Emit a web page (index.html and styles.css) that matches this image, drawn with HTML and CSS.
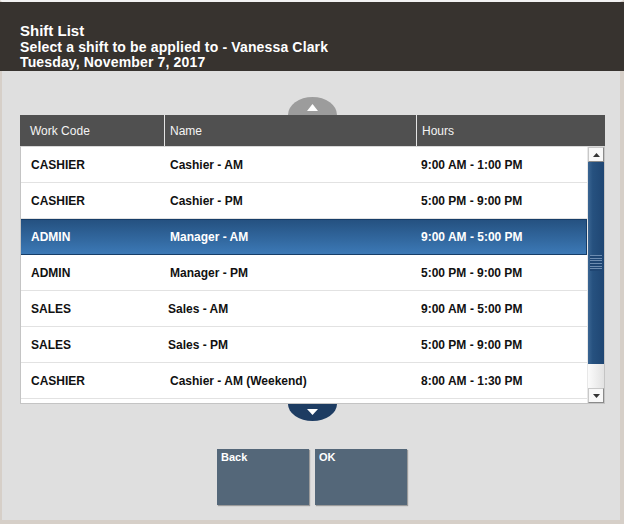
FILE: index.html
```html
<!DOCTYPE html>
<html lang="en">

<head>
    <meta charset="UTF-8">
    <meta name="viewport" content="width=device-width, initial-scale=1.0">
    <title>Shift List</title>
    <link rel="stylesheet" href="styles.css">
</head>

<body>
    <div class="screen">
        <div class="header">
            <div class="title">Shift List</div>
            <div class="subtitle">Select a shift to be applied to - Vanessa Clark</div>
            <div class="subtitle">Tuesday, November 7, 2017</div>
        </div>

        <div class="content">
            <div class="arrow arrow-up">
                <svg width="11" height="7" viewBox="0 0 11 7"><polygon points="5.5,0 11,7 0,7" fill="#fff" /></svg>
            </div>

            <div class="grid">
                <div class="grid-head">
                    <div class="hcell">Work Code</div>
                    <div class="hcell">Name</div>
                    <div class="hcell last">Hours</div>
                </div>

                <div class="grid-body">
                    <div class="rows">
                        <div class="row">
                            <div class="c1">CASHIER</div>
                            <div class="c2">Cashier - AM</div>
                            <div class="c3">9:00 AM - 1:00 PM</div>
                        </div>
                        <div class="row">
                            <div class="c1">CASHIER</div>
                            <div class="c2">Cashier - PM</div>
                            <div class="c3">5:00 PM - 9:00 PM</div>
                        </div>
                        <div class="row selected">
                            <div class="c1">ADMIN</div>
                            <div class="c2">Manager - AM</div>
                            <div class="c3">9:00 AM - 5:00 PM</div>
                        </div>
                        <div class="row">
                            <div class="c1">ADMIN</div>
                            <div class="c2">Manager - PM</div>
                            <div class="c3">5:00 PM - 9:00 PM</div>
                        </div>
                        <div class="row">
                            <div class="c1">SALES</div>
                            <div class="c2 tight">Sales - AM</div>
                            <div class="c3">9:00 AM - 5:00 PM</div>
                        </div>
                        <div class="row">
                            <div class="c1">SALES</div>
                            <div class="c2 tight">Sales - PM</div>
                            <div class="c3">5:00 PM - 9:00 PM</div>
                        </div>
                        <div class="row">
                            <div class="c1">CASHIER</div>
                            <div class="c2">Cashier - AM (Weekend)</div>
                            <div class="c3">8:00 AM - 1:30 PM</div>
                        </div>
                        <!-- next row, scrolled out of view -->
                        <div class="row"></div>
                    </div>

                    <!-- scrollbar -->
                    <div class="scrollbar">
                        <div class="sb-btn">
                            <svg width="7" height="4" viewBox="0 0 7 4"><polygon points="3.5,0 7,4 0,4" fill="#333" /></svg>
                        </div>
                        <div class="sb-thumb">
                            <div class="grip"></div>
                        </div>
                        <div class="sb-track"></div>
                        <div class="sb-btn">
                            <svg width="7" height="4" viewBox="0 0 7 4"><polygon points="0,0 7,0 3.5,4" fill="#333" /></svg>
                        </div>
                    </div>
                </div>
            </div>

            <div class="arrow arrow-down">
                <svg width="11" height="6" viewBox="0 0 11 6"><polygon points="0,0 11,0 5.5,6" fill="#fff" /></svg>
            </div>

            <div class="buttons">
                <div class="btn">Back</div>
                <div class="btn">OK</div>
            </div>
        </div>
    </div>
</body>

</html>
```

FILE: styles.css
```css
* {
    padding: 0;
    margin: 0;
    box-sizing: border-box;
}

body {
    font-family: "Liberation Sans", Arial, sans-serif;
    background-color: #dfdfdf;
}

.screen {
    display: flex;
    flex-direction: column;
    width: 624px;
    height: 524px;
    border-top: 2px solid #f2f2f2;
    border-left: 2px solid #d6cfc8;
    border-right: 4px solid #d6cfc8;
    border-bottom: 4px solid #d6cfc8;
    background-color: #dfdfdf;
}

.header {
    height: 69px;
    margin-left: -2px;
    margin-right: -4px;
    padding: 20px 0 0 20px;
    background-color: #37332f;
    color: #fff;
    font-weight: bold;
}

.title {
    font-size: 15px;
    line-height: 18px;
}

.subtitle {
    font-size: 14px;
    line-height: 15px;
    letter-spacing: 0.15px;
}

.content {
    display: flex;
    flex-direction: column;
    flex: 1;
    padding: 26px 0 0 18px;
}

.arrow {
    display: flex;
    justify-content: center;
    width: 49px;
    margin-left: 268px;
}

.arrow-up {
    height: 18px;
    padding-top: 7px;
    background-color: #9c9c9c;
    border-radius: 50% 50% 0 0 / 100% 100% 0 0;
}

.arrow-down {
    height: 17px;
    padding-top: 5px;
    background-color: #1d3c62;
    border-radius: 0 0 50% 50% / 0 0 100% 100%;
}

.grid {
    width: 585px;
}

.grid-head {
    display: grid;
    grid-template-columns: 145px 252px 1fr;
    height: 31px;
    background-color: #505050;
    color: #f4f4f4;
    font-size: 12px;
}

.hcell {
    display: flex;
    align-items: center;
    padding-left: 5px;
    border-right: 1px solid #e4e4e4;
}

.hcell:first-child {
    padding-left: 10px;
}

.hcell.last {
    border-right: none;
}

.grid-body {
    display: flex;
    height: 258px;
    border: 1px solid #c4c4c4;
    border-top-color: #d8d8d8;
    background-color: #fff;
    overflow: hidden;
}

.rows {
    flex: 1;
    overflow: hidden;
}

.row {
    display: grid;
    grid-template-columns: 143px 252px 1fr;
    align-items: center;
    height: 36px;
    padding-top: 1px;
    border-bottom: 1px solid #e2e2e2;
    font-size: 12px;
    font-weight: bold;
    color: #111;
}

.row.selected {
    border-bottom-color: #163d68;
    box-shadow: inset 0 1px 0 #163d68, inset -1px 0 0 #163d68;
    background: linear-gradient(#24507f, #3c79b6);
    color: #fff;
}

.c1 {
    padding-left: 10px;
}

.c2 {
    padding-left: 6px;
}

.c2.tight {
    padding-left: 4px;
}

.c3 {
    padding-left: 5px;
}

.scrollbar {
    display: flex;
    flex-direction: column;
    width: 17px;
    border-left: 1px solid #e8e8e8;
}

.sb-btn {
    display: flex;
    align-items: center;
    justify-content: center;
    height: 15px;
    background-color: #f8f8f8;
    border: 1px solid #8a8a8a;
    border-top-color: #c8c8c8;
    border-left-color: #c8c8c8;
}

.sb-thumb {
    display: flex;
    align-items: center;
    justify-content: center;
    height: 202px;
    background: linear-gradient(to right, #3a6592, #26517f 30%, #1f4673);
}

.grip {
    width: 12px;
    height: 16px;
    background: repeating-linear-gradient(#6d8cb0 0, #6d8cb0 1px, #1f4673 1px, #1f4673 2.7px);
}

.sb-track {
    flex: 1;
    background: linear-gradient(to right, #fbfbfb, #e2e2e2);
}

.buttons {
    display: flex;
    gap: 6px;
    margin: 28px 0 0 197px;
}

.btn {
    width: 92px;
    height: 56px;
    padding: 2px 0 0 4px;
    background-color: #546779;
    box-shadow: 1px 1px 1px rgba(0, 0, 0, 0.3);
    color: #fff;
    font-size: 11px;
    font-weight: bold;
}
```
